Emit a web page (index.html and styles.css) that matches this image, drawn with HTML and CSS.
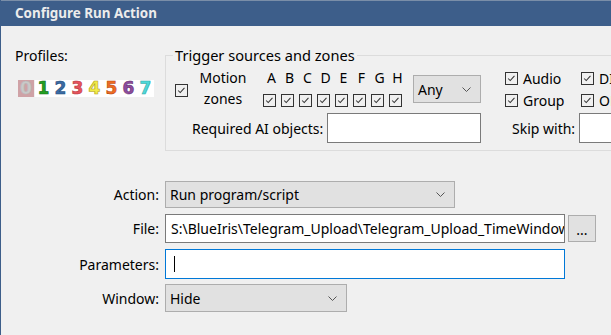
FILE: index.html
```html
<!DOCTYPE html>
<html>
<head>
<meta charset="utf-8">
<link rel="stylesheet" href="styles.css">
</head>
<body>
<div class="window">
  <div class="titlebar">Configure Run Action</div>
  <div class="content">
    <div class="top">
      <div class="profiles">
        <div class="plabel">Profiles:</div>
        <div class="digits">
          <span class="d d0">0</span><span class="d d1">1</span><span class="d d2">2</span><span class="d d3">3</span><span class="d d4">4</span><span class="d d5">5</span><span class="d d6">6</span><span class="d d7">7</span>
        </div>
      </div>
      <fieldset class="group">
        <legend>Trigger sources and zones</legend>
        <div class="row1">
          <div class="mcheck"><span class="cb"><svg viewBox="0 0 13 13"><polyline points="2.5,6.5 5,9 10,3.5"/></svg></span></div>
          <div class="mlabel">Motion<br>zones</div>
          <div class="zones">
            <span class="zl">A</span><span class="zl">B</span><span class="zl">C</span><span class="zl">D</span><span class="zl">E</span><span class="zl">F</span><span class="zl">G</span><span class="zl">H</span>
            <span class="zc"><span class="cb"><svg viewBox="0 0 13 13"><polyline points="2.5,6.5 5,9 10,3.5"/></svg></span></span>
            <span class="zc"><span class="cb"><svg viewBox="0 0 13 13"><polyline points="2.5,6.5 5,9 10,3.5"/></svg></span></span>
            <span class="zc"><span class="cb"><svg viewBox="0 0 13 13"><polyline points="2.5,6.5 5,9 10,3.5"/></svg></span></span>
            <span class="zc"><span class="cb"><svg viewBox="0 0 13 13"><polyline points="2.5,6.5 5,9 10,3.5"/></svg></span></span>
            <span class="zc"><span class="cb"><svg viewBox="0 0 13 13"><polyline points="2.5,6.5 5,9 10,3.5"/></svg></span></span>
            <span class="zc"><span class="cb"><svg viewBox="0 0 13 13"><polyline points="2.5,6.5 5,9 10,3.5"/></svg></span></span>
            <span class="zc"><span class="cb"><svg viewBox="0 0 13 13"><polyline points="2.5,6.5 5,9 10,3.5"/></svg></span></span>
            <span class="zc"><span class="cb"><svg viewBox="0 0 13 13"><polyline points="2.5,6.5 5,9 10,3.5"/></svg></span></span>
          </div>
          <div class="select any"><span>Any</span><svg class="chev" viewBox="0 0 9 5"><polyline points="0.5,0.5 4.5,4.5 8.5,0.5"/></svg></div>
          <div class="checks c1">
            <div class="ck"><span class="cb"><svg viewBox="0 0 13 13"><polyline points="2.5,6.5 5,9 10,3.5"/></svg></span><span>Audio</span></div>
            <div class="ck"><span class="cb"><svg viewBox="0 0 13 13"><polyline points="2.5,6.5 5,9 10,3.5"/></svg></span><span>Group</span></div>
          </div>
          <div class="checks c2">
            <div class="ck"><span class="cb"><svg viewBox="0 0 13 13"><polyline points="2.5,6.5 5,9 10,3.5"/></svg></span><span>DIO</span></div>
            <div class="ck"><span class="cb"><svg viewBox="0 0 13 13"><polyline points="2.5,6.5 5,9 10,3.5"/></svg></span><span>ONVIF</span></div>
          </div>
        </div>
        <div class="row2">
          <span class="ailabel">Required AI objects:</span>
          <span class="input ai"></span>
          <span class="skiplabel">Skip with:</span>
          <span class="input skip"></span>
        </div>
      </fieldset>
    </div>
    <div class="form">
      <div class="flabel">Action:</div>
      <div class="select action"><span>Run program/script</span><svg class="chev" viewBox="0 0 9 5"><polyline points="0.5,0.5 4.5,4.5 8.5,0.5"/></svg></div>
      <div class="flabel">File:</div>
      <div class="filerow">
        <div class="input file"><div class="ftext">S:\BlueIris\Telegram_Upload\Telegram_Upload_TimeWindow.bat</div></div>
        <div class="btn">...</div>
      </div>
      <div class="flabel">Parameters:</div>
      <div class="input params"><span class="caret"></span></div>
      <div class="flabel">Window:</div>
      <div class="select window-sel"><span>Hide</span><svg class="chev" viewBox="0 0 9 5"><polyline points="0.5,0.5 4.5,4.5 8.5,0.5"/></svg></div>
    </div>
  </div>
</div>
</body>
</html>
```

FILE: styles.css
```css
* { box-sizing: border-box; }
html, body { margin: 0; padding: 0; }
body {
  width: 611px;
  height: 335px;
  overflow: hidden;
  background: #f0f0f0;
  font-family: "Noto Sans", "Open Sans", sans-serif;
  font-size: 14px;
  color: #000;
}
.window {
  width: 611px;
  height: 335px;
  border-left: 1px solid #3d5e8a;
  overflow: hidden;
}
.titlebar {
  height: 26px;
  background: #3d5e8a;
  border-top: 1px solid #7a8ea8;
  color: #ececec;
  font-weight: bold;
  font-size: 13.4px;
  line-height: 24px;
  padding-left: 14px;
}
.content {
  padding-left: 14px;
}
.top {
  display: flex;
  padding-top: 20px;
  width: 800px;
}
.profiles {
  width: 150px;
  flex: none;
}
.plabel {
  line-height: 19px;
}
.digits {
  display: flex;
  margin-top: 15px;
  margin-left: 3px;
}
.d {
  width: 17px;
  height: 17px;
  background: #fff;
  font-weight: bold;
  font-size: 17px;
  line-height: 17px;
  text-align: center;
  font-family: "DejaVu Sans", sans-serif;
  -webkit-text-stroke: 0.6px;
}
.d0 { background: #cfa2a6; color: #c9c9c9; -webkit-text-stroke-color: #b8b8b8; width: 16px; margin-right: 1px; }
.d1 { color: #22a022; -webkit-text-stroke-color: #147014; }
.d2 { color: #3a6ca6; -webkit-text-stroke-color: #254a78; }
.d3 { color: #e8545c; -webkit-text-stroke-color: #b83840; }
.d4 { color: #f2ec48; -webkit-text-stroke-color: #b0a020; }
.d5 { color: #ef6c24; -webkit-text-stroke-color: #b84a10; }
.d6 { color: #8e4c9e; -webkit-text-stroke-color: #643070; }
.d7 { color: #4fd8d8; -webkit-text-stroke-color: #30a8a8; }

.group {
  margin: 0;
  border: 1px solid #dcdcdc;
  padding: 0 0 7px 9px;
  width: 620px;
  flex: none;
}
.group legend {
  padding: 0 2px;
  margin-left: -2px;
  line-height: 19px;
  font-size: 14.6px;
}
.row1 {
  display: flex;
  align-items: flex-start;
  margin-top: 3px;
  height: 40px;
}
.cb {
  display: inline-block;
  width: 13px;
  height: 13px;
  border: 1px solid #333;
  background: transparent;
  flex: none;
}
.cb svg {
  display: block;
  width: 11px;
  height: 11px;
}
.cb polyline {
  fill: none;
  stroke: #333;
  stroke-width: 1.2;
}
.mcheck {
  width: 20px;
  padding-top: 14px;
  flex: none;
}
.mlabel {
  width: 56px;
  text-align: center;
  line-height: 21px;
  margin-top: -1px;
  flex: none;
}
.zones {
  display: grid;
  grid-template-columns: repeat(8, 18px);
  grid-template-rows: 21px 18px;
  margin-left: 12px;
  flex: none;
}
.zl {
  text-align: center;
  line-height: 19px;
  margin-left: -1px;
}
.zc {
  padding-top: 3px;
}
.select {
  display: flex;
  align-items: center;
  justify-content: space-between;
  background: #e1e1e1;
  border: 1px solid #adadad;
  padding: 0 9px 0 4px;
  flex: none;
}
.chev {
  width: 9px;
  height: 5px;
}
.chev polyline {
  fill: none;
  stroke: #555;
  stroke-width: 1;
}
.any {
  width: 68px;
  height: 28px;
  margin-left: 6px;
  margin-top: 7px;
}
.checks {
  flex: none;
  display: flex;
  flex-direction: column;
  gap: 3px;
  margin-top: 1px;
}
.c1 { width: 76px; margin-left: 24px; }
.ck {
  display: flex;
  align-items: center;
  gap: 5px;
  height: 19px;
}
.row2 {
  display: flex;
  align-items: center;
  margin-top: 5px;
}
.ailabel {
  margin-left: 17px;
  width: 135px;
}
.input {
  display: block;
  background: #fff;
  border: 1px solid #7a7a7a;
  height: 30px;
  flex: none;
}
.ai { width: 154px; }
.skiplabel {
  margin-left: 31px;
  width: 67px;
}
.skip { width: 60px; }

.form {
  display: grid;
  grid-template-columns: 144px 402px;
  column-gap: 6px;
  margin-top: 30px;
  align-items: center;
}
.flabel {
  text-align: right;
}
.action {
  width: 290px;
  height: 27px;
}
.filerow {
  display: flex;
  align-items: center;
  gap: 3px;
  margin-top: 6px;
}
.file {
  width: 400px;
  height: 29px;
  padding-left: 5px;
}
.ftext {
  width: 393px;
  overflow: hidden;
  white-space: nowrap;
  line-height: 27px;
}
.btn {
  width: 28px;
  height: 27px;
  background: #e1e1e1;
  border: 1px solid #adadad;
  text-align: center;
  line-height: 27px;
  flex: none;
}
.form > .flabel:nth-child(3) { margin-top: 6px; }
.params {
  width: 400px;
  height: 30px;
  border-color: #0078d7;
  margin-top: 6px;
  padding: 6px 0 0 8px;
}
.form > .flabel:nth-child(5) { margin-top: 6px; }
.caret {
  display: block;
  width: 1px;
  height: 16px;
  background: #000;
}
.window-sel {
  width: 182px;
  height: 28px;
  margin-top: 5px;
}
.form > .flabel:nth-child(7) { margin-top: 5px; }
```
